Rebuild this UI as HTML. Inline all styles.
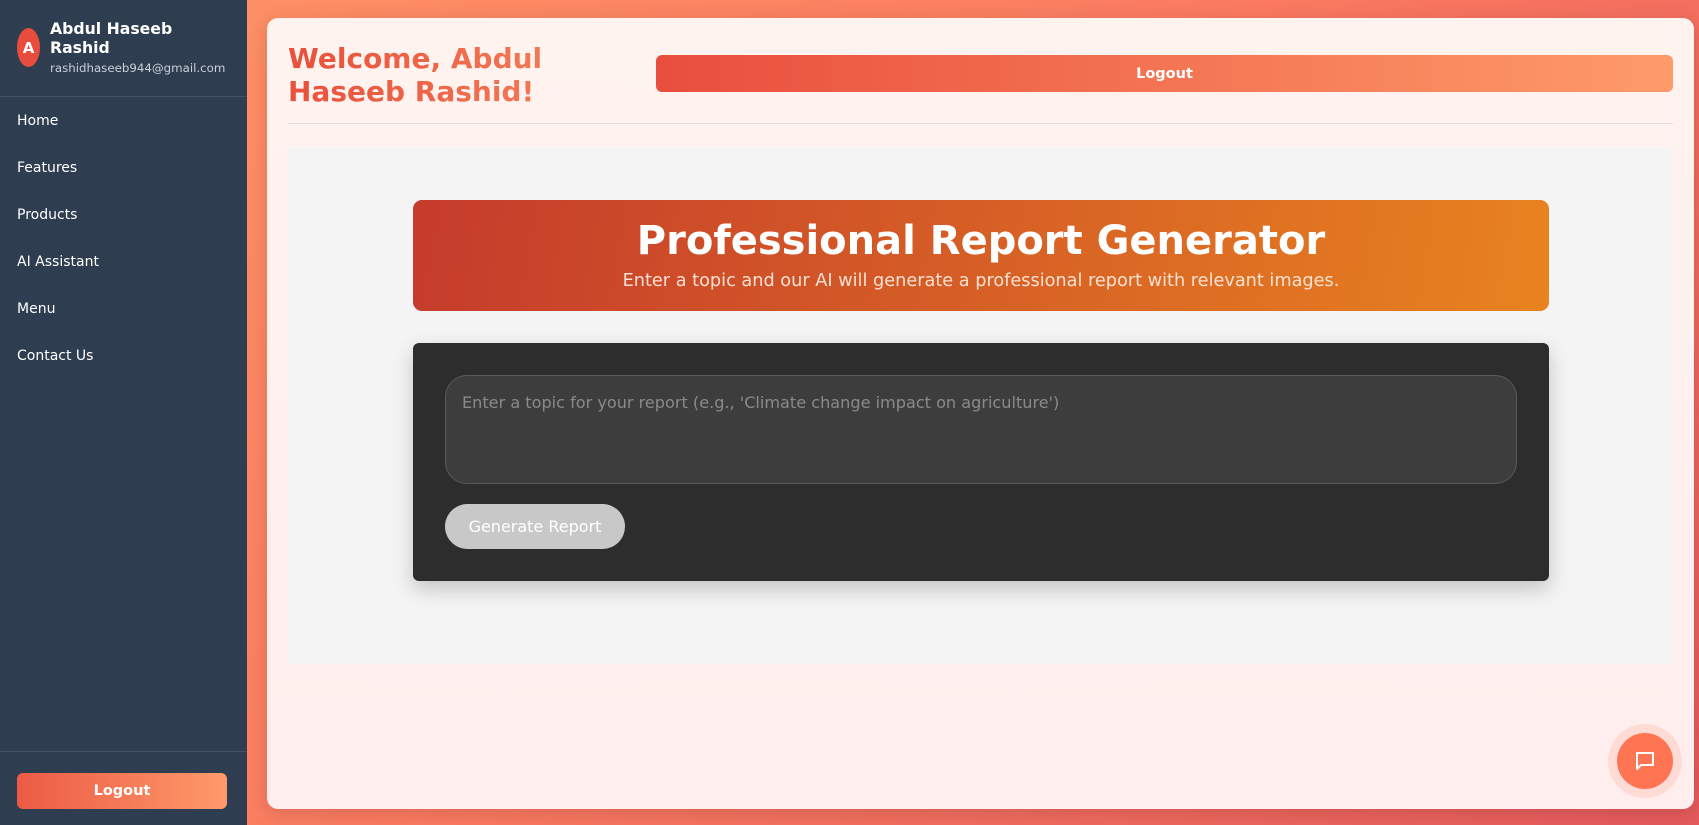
<!DOCTYPE html>
<html><head><meta charset="utf-8"><style>
*{box-sizing:border-box;margin:0;padding:0}
body{width:1699px;height:825px;overflow:hidden;font-family:"DejaVu Sans","Liberation Sans",sans-serif;background:linear-gradient(135deg,#ff9466 0%,#fb7a60 50%,#e65a5c 100%);position:relative}
.side{position:absolute;left:0;top:0;width:247px;height:825px;background:#2e3e50;color:#fff}
.av{position:absolute;left:17px;top:28px;width:23px;height:39px;border-radius:50%;background:#e74c3c;font-weight:bold;font-size:15px;display:flex;align-items:center;justify-content:center}
.nm{position:absolute;left:50px;top:19px;font-weight:bold;font-size:15.7px;line-height:19px}
.em{position:absolute;left:50px;top:61px;font-size:11.8px;color:#c9d0d8}
.hr1{position:absolute;left:0;top:96px;width:247px;height:1px;background:#43535f}
.nav a{position:absolute;left:17px;font-size:14px;color:#fff}
.hr2{position:absolute;left:0;top:751px;width:247px;height:1px;background:#43535f}
.lo{position:absolute;left:17px;top:773px;width:210px;height:36px;border-radius:6px;background:linear-gradient(90deg,#ec5a45,#fe9a6a);font-weight:bold;font-size:14.5px;display:flex;align-items:center;justify-content:center}
.card{position:absolute;left:267px;top:18px;width:1427px;height:791px;border-radius:11px;background:linear-gradient(180deg,#fff3ef,#ffeeed);box-shadow:0 4px 20px rgba(0,0,0,.15)}
h1{position:absolute;left:288px;top:42px;font-size:28px;line-height:33px;font-weight:bold;background:linear-gradient(90deg,#e8503b,#f47f5a);-webkit-background-clip:text;color:transparent;width:300px}
.tlo{position:absolute;left:656px;top:55px;width:1017px;height:37px;border-radius:6px;background:linear-gradient(90deg,#e94e3d,#fe9b6a);color:#fff;font-weight:bold;font-size:14.5px;display:flex;align-items:center;justify-content:center}
.hr3{position:absolute;left:288px;top:123px;width:1385px;height:1px;background:#efdcda}
.gray{position:absolute;left:288px;top:147px;width:1385px;height:517px;background:#f4f4f4}
.ban{position:absolute;left:413px;top:200px;width:1136px;height:111px;border-radius:9px;background:linear-gradient(100deg,#c53b2c,#e8831f);color:#fff;text-align:center}
.ban h2{font-size:40px;line-height:46px;margin-top:18px}
.ban p{font-size:17.7px;color:#fbe1d3;margin-top:7px}
.dark{position:absolute;left:413px;top:343px;width:1136px;height:238px;border-radius:6px;background:#2d2d2d;box-shadow:0 8px 20px rgba(0,0,0,.2)}
.ta{position:absolute;left:445px;top:375px;width:1072px;height:109px;border-radius:22px;background:#3d3d3d;border:1px solid #5a5a5a;color:#8a8a8a;font-size:16.1px;padding:17px 16px}
.gb{position:absolute;left:445px;top:504px;width:180px;height:45px;border-radius:23px;background:#c8c8c8;color:#fff;font-size:16px;display:flex;align-items:center;justify-content:center}
.halo{position:absolute;left:1608px;top:724px;width:74px;height:74px;border-radius:50%;background:rgba(255,200,190,.5)}
.chat{position:absolute;left:1617px;top:733px;width:56px;height:56px;border-radius:50%;background:#ff7452;display:flex;align-items:center;justify-content:center}
</style></head><body>
<div class="side">
<div class="av">A</div>
<div class="nm">Abdul Haseeb<br>Rashid</div>
<div class="em">rashidhaseeb944@gmail.com</div>
<div class="hr1"></div>
<div class="nav">
<a style="top:113px">Home</a><a style="top:160px">Features</a><a style="top:207px">Products</a><a style="top:254px">AI Assistant</a><a style="top:301px">Menu</a><a style="top:348px">Contact Us</a>
</div>
<div class="hr2"></div>
<div class="lo">Logout</div>
</div>
<div class="card"></div>
<h1>Welcome, Abdul Haseeb Rashid!</h1>
<div class="tlo">Logout</div>
<div class="hr3"></div>
<div class="gray"></div>
<div class="ban"><h2>Professional Report Generator</h2><p>Enter a topic and our AI will generate a professional report with relevant images.</p></div>
<div class="dark"></div>
<div class="ta">Enter a topic for your report (e.g., 'Climate change impact on agriculture')</div>
<div class="gb">Generate Report</div>
<div class="halo"></div>
<div class="chat"><svg width="24" height="24" viewBox="0 0 24 24" fill="none" stroke="#fff" stroke-width="2" stroke-linejoin="round"><path d="M4 4h16v12H8l-4 4z"/></svg></div>
</body></html>
